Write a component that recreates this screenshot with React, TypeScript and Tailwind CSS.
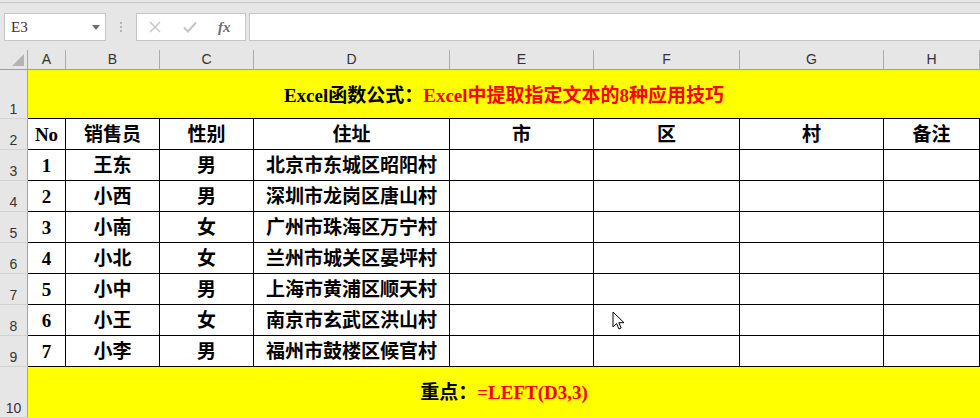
import React from "react";

const cols = ["A", "B", "C", "D", "E", "F", "G", "H"];

const header = ["No", "销售员", "性别", "住址", "市", "区", "村", "备注"];

const rows: string[][] = [
  ["1", "王东", "男", "北京市东城区昭阳村"],
  ["2", "小西", "男", "深圳市龙岗区唐山村"],
  ["3", "小南", "女", "广州市珠海区万宁村"],
  ["4", "小北", "女", "兰州市城关区晏坪村"],
  ["5", "小中", "男", "上海市黄浦区顺天村"],
  ["6", "小王", "女", "南京市玄武区洪山村"],
  ["7", "小李", "男", "福州市鼓楼区候官村"],
];

const cellFont = {
  fontFamily: '"Liberation Serif", "Noto Sans CJK SC", serif',
};

function RowHead({ n }: { n: number }) {
  return (
    <div
      className="flex items-end justify-center border-r border-b border-r-[#a6a6a6] border-b-[#d2d2d2] bg-[#e6e6e6] pb-[2px] text-[14px] leading-none text-[#333]"
      style={{ fontFamily: '"Liberation Sans", Arial, sans-serif' }}
    >
      {n}
    </div>
  );
}

function Cell({ children }: { children?: React.ReactNode }) {
  return (
    <div
      className="flex items-center justify-center border-r border-b border-black bg-white text-[19px] font-bold leading-none text-black"
      style={cellFont}
    >
      {children}
    </div>
  );
}

export default function App(): React.ReactElement {
  return (
    <div className="relative h-[418px] w-[980px] overflow-hidden bg-[#e6e6e6]">
      {/* formula bar */}
      <div className="mt-[2px] flex h-[48px] items-start border-t border-[#c8c8c8] pt-[10px] pl-[4px]">
        <div className="relative flex h-[28px] w-[102px] items-center border border-[#c6c6c6] bg-white pl-[6px]">
          <span
            className="text-[15px] text-[#333]"
            style={{ fontFamily: '"Liberation Serif", serif' }}
          >
            E3
          </span>
          <svg className="absolute right-[5px] top-[11px]" width="8" height="5" viewBox="0 0 8 5">
            <path d="M0 0h8L4 5z" fill="#6e6e6e" />
          </svg>
        </div>
        <div className="flex h-[28px] w-[30px] flex-col items-center justify-center gap-[2px]">
          <span className="h-[2px] w-[2px] bg-[#b4b4b4]" />
          <span className="h-[2px] w-[2px] bg-[#b4b4b4]" />
          <span className="h-[2px] w-[2px] bg-[#b4b4b4]" />
        </div>
        <div className="flex h-[28px] w-[110px] items-center border border-[#c6c6c6] bg-white">
          <svg className="ml-[12px]" width="12" height="12" viewBox="0 0 12 12">
            <path d="M1 1l10 10M11 1L1 11" stroke="#c4c4c4" strokeWidth="1.4" />
          </svg>
          <svg className="ml-[22px]" width="14" height="12" viewBox="0 0 14 12">
            <path d="M1 6.5l4 4L13 1.5" stroke="#c4c4c4" strokeWidth="2" fill="none" />
          </svg>
          <span
            className="ml-[21px] text-[15px] font-semibold italic text-[#6e6e6e]"
            style={{ fontFamily: '"Liberation Serif", serif' }}
          >
            fx
          </span>
        </div>
        <div className="ml-[3px] h-[28px] flex-1 border-y border-l border-[#c6c6c6] bg-white" />
      </div>

      {/* sheet */}
      <div className="grid grid-cols-[28px_38px_94px_94px_196px_144px_146px_144px_96px] grid-rows-[20px_49px_31px_31px_31px_31px_31px_31px_31px_31px_51px]">
        {/* column headers */}
        <div className="relative border-r border-b border-r-[#a6a6a6] border-b-[#9e9e9e] bg-[#e6e6e6]">
          <svg className="absolute right-[3px] bottom-[3px]" width="12" height="12" viewBox="0 0 12 12">
            <path d="M12 0v12H0z" fill="#b4b4b4" />
          </svg>
        </div>
        {cols.map((c) => (
          <div
            key={c}
            className="flex items-center justify-center border-r border-b border-r-[#ababab] border-b-[#9e9e9e] bg-[#e6e6e6] text-[14px] text-[#333]"
            style={{ fontFamily: '"Liberation Sans", Arial, sans-serif' }}
          >
            {c}
          </div>
        ))}

        {/* row 1 title */}
        <RowHead n={1} />
        <div
          className="col-span-8 flex items-center justify-center border-b border-black bg-[#ffff00] pt-[3px] text-[19px] font-bold leading-none"
          style={cellFont}
        >
          <span className="text-black">Excel函数公式：</span>
          <span className="text-[#ff0000]">Excel中提取指定文本的8种应用技巧</span>
        </div>

        {/* row 2 header */}
        <RowHead n={2} />
        {header.map((h) => (
          <Cell key={h}>{h}</Cell>
        ))}

        {/* data rows */}
        {rows.map((r, i) => (
          <React.Fragment key={r[0]}>
            <RowHead n={i + 3} />
            <Cell>{r[0]}</Cell>
            <Cell>{r[1]}</Cell>
            <Cell>{r[2]}</Cell>
            <Cell>{r[3]}</Cell>
            <Cell />
            <Cell />
            <Cell />
            <Cell />
          </React.Fragment>
        ))}

        {/* row 10 */}
        <RowHead n={10} />
        <div
          className="col-span-8 flex items-center justify-center bg-[#ffff00] text-[19px] font-bold leading-none"
          style={cellFont}
        >
          <span className="text-black">重点：</span>
          <span className="text-[#ff0000]">=LEFT(D3,3)</span>
        </div>
      </div>

      {/* mouse pointer */}
      <svg className="absolute left-[612px] top-[311px]" width="13" height="20" viewBox="0 0 13 20">
        <path
          d="M1 1v15l3.5-3.5L7 18l2.2-1-2.4-5.3H12z"
          fill="#fff"
          stroke="#000"
          strokeWidth="1"
        />
      </svg>
    </div>
  );
}
